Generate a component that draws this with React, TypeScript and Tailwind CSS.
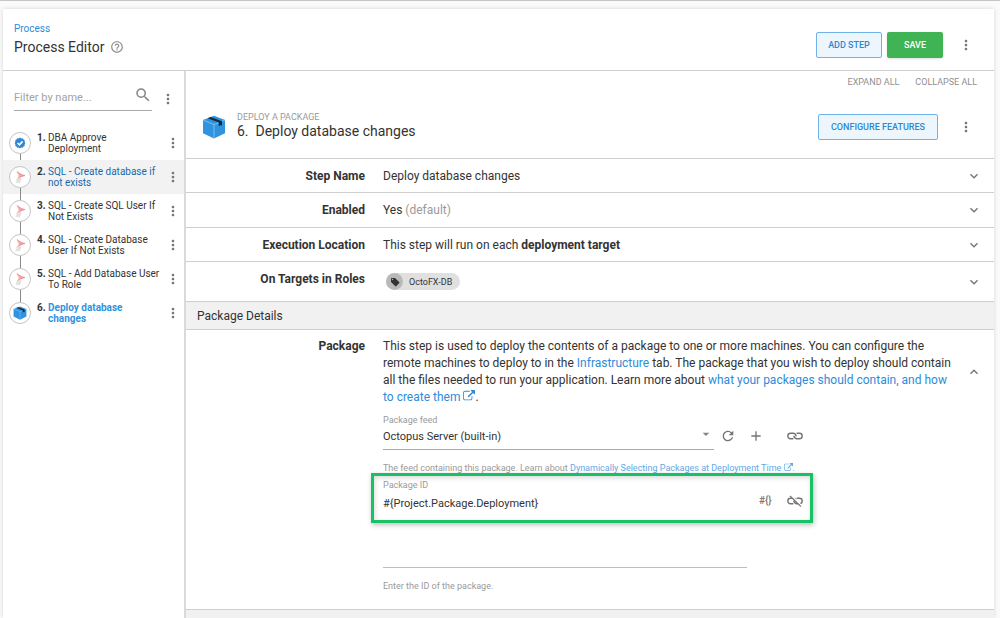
import type { ReactNode } from "react";
import {
  MdAdd,
  MdArrowDropDown,
  MdHelpOutline,
  MdKeyboardArrowDown,
  MdKeyboardArrowUp,
  MdMoreVert,
  MdRefresh,
  MdSearch,
} from "react-icons/md";

type StepKind = "approve" | "sql" | "package";

interface Step {
  lines: [string, string];
  kind: StepKind;
  state?: "hovered" | "current";
}

const steps: Step[] = [
  { lines: ["DBA Approve", "Deployment"], kind: "approve" },
  { lines: ["SQL - Create database if", "not exists"], kind: "sql", state: "hovered" },
  { lines: ["SQL - Create SQL User If", "Not Exists"], kind: "sql" },
  { lines: ["SQL - Create Database", "User If Not Exists"], kind: "sql" },
  { lines: ["SQL - Add Database User", "To Role"], kind: "sql" },
  { lines: ["Deploy database", "changes"], kind: "package", state: "current" },
];

function PackageIcon({ className }: { className: string }) {
  return (
    <svg viewBox="0 0 24 24" className={className} aria-hidden="true">
      <path d="M12 .8 23 5v13.200L12 23.400 1 18.200V5z" fill="#2f93e0" />
      <path d="M1 5 12 9.600 23 5M12 9.600V23" fill="none" stroke="#8fc8f4" strokeWidth=".8" />
      <path d="m5.600 3.200 3-1.200L20 6.200v4.600l-1.500-.9-1.700 1.600V7.600z" fill="#122b40" />
    </svg>
  );
}

function ApproveIcon() {
  return (
    <svg viewBox="0 0 12 12" className="size-3" aria-hidden="true">
      <path
        d="M6 .6 7.300 1.400 8.800 1.200 9.500 2.600 10.800 3.300 10.600 4.800 11.400 6 10.600 7.300 10.800 8.800 9.500 9.500 8.800 10.800 7.300 10.600 6 11.400 4.700 10.600 3.200 10.800 2.500 9.500 1.200 8.800 1.400 7.300.6 6 1.400 4.800 1.200 3.300 2.500 2.600 3.200 1.200 4.700 1.400z"
        fill="#2f87d6"
      />
      <path d="M3.500 6 5.400 7.800 8.600 4.400" fill="none" stroke="#fff" strokeWidth="1.600" />
    </svg>
  );
}

function SqlIcon() {
  return (
    <svg viewBox="0 0 16 16" className="size-4" aria-hidden="true">
      <path d="M3.500 13.800c.5-2.600 2.500-4.800 5.500-5.300L7.800 14 5 14.300z" fill="#e4e4e4" />
      <path d="M8.800 9.500 7.400 13.500" stroke="#c8c8c8" strokeWidth=".6" fill="none" />
      <path d="M4.500 2.200C6.500 2.800 8 5.300 13.500 6.400 10 7.600 7 9 4 11.200 5.800 8.800 7 7.600 6.600 6.200 6.200 4.700 5 3.600 4.500 2.200z" fill="#f3aaaa" />
      <path d="M5 2.600C7 3.900 8.500 5.800 13 6.500L8 7.600" fill="none" stroke="#e88082" strokeWidth=".6" />
    </svg>
  );
}

function ExternalIcon({ className }: { className: string }) {
  return (
    <svg viewBox="0 0 1792 1792" className={className} fill="currentColor" aria-hidden="true">
      <path d="M1408 928v320q0 119-84.500 203.500t-203.500 84.500h-832q-119 0-203.500-84.500t-84.500-203.500v-832q0-119 84.500-203.500t203.500-84.500h704q14 0 23 9t9 23v64q0 14-9 23t-23 9h-704q-66 0-113 47t-47 113v832q0 66 47 113t113 47h832q66 0 113-47t47-113v-320q0-14 9-23t23-9h64q14 0 23 9t9 23zm384-864v512q0 26-19 45t-45 19-45-19l-176-176-652 652q-10 10-23 10t-23-10l-114-114q-10-10-10-23t10-23l652-652-176-176q-19-19-19-45t19-45 45-19h512q26 0 45 19t19 45z" />
    </svg>
  );
}

function LinkIcon({ broken = false }: { broken?: boolean }) {
  return (
    <svg viewBox="0 0 18 14" className="h-3.5 w-[18px]" fill="none" stroke="currentColor" strokeWidth="1.400" aria-hidden="true">
      <path d="M7.400 9.700H4.500a2.700 2.700 0 0 1 0-5.400H7.200Q9.400 4.300 10.300 7.200" />
      <path d="M10.600 4.300H13.500a2.700 2.700 0 0 1 0 5.400H10.800Q8.600 9.700 7.700 6.800" />
      {broken && (
        <>
          <path d="M5 1.400 15.800 11.700" stroke="#fff" />
          <path d="M4 2 15 12.600" strokeWidth="1.200" />
        </>
      )}
    </svg>
  );
}

function MoreButton({ label }: { label: string }) {
  return (
    <button type="button" aria-label={label} className="flex size-4 shrink-0 items-center justify-center text-[#757575]">
      <MdMoreVert className="size-4" />
    </button>
  );
}

function StepItem({ step, index }: { step: Step; index: number }) {
  const tone =
    step.state === "hovered" ? "text-[#1b68ac]" : step.state === "current" ? "font-bold text-[#2f93e0]" : "text-[#333333]";
  return (
    <li className={`relative flex h-[34px] items-center pr-[3px] pl-1.5 ${step.state === "hovered" ? "bg-[#f2f2f2]" : ""}`}>
      {index < steps.length - 1 && <span className="absolute top-7 left-[17px] h-3 w-px bg-[#8a8a8a]" />}
      <span className="relative z-10 flex size-[22px] shrink-0 items-center justify-center rounded-full border border-[#c4c4c4] bg-white">
        {step.kind === "approve" && <ApproveIcon />}
        {step.kind === "sql" && <SqlIcon />}
        {step.kind === "package" && <PackageIcon className="size-3.5" />}
      </span>
      <a href="#step" className="ml-1.5 flex min-w-0 flex-1 text-[10px] leading-[11px]">
        <b className="w-[11px] shrink-0 text-[#333333]">{index + 1}.</b>
        <span className={`whitespace-nowrap ${tone}`}>
          {step.lines[0]}
          <br />
          {step.lines[1]}
        </span>
      </a>
      <MoreButton label={`Actions for step ${index + 1}`} />
    </li>
  );
}

interface RowProps {
  title: string;
  className: string;
  titleClassName?: string;
  children: ReactNode;
}

function Row({ title, className, titleClassName = "", children }: RowProps) {
  return (
    <section className={`flex items-center border-b border-[#cfcfcf] pr-3 ${className}`}>
      <h3 className={`w-[179px] shrink-0 text-right font-bold ${titleClassName}`}>{title}</h3>
      <div className="ml-[18px] flex-1">{children}</div>
      <button type="button" aria-label={`Expand ${title}`} className="text-[#757575]">
        <MdKeyboardArrowDown className="size-4" />
      </button>
    </section>
  );
}

const link = "text-[#2f8bd8]";

export default function App() {
  return (
    <div className="flex min-h-screen flex-col border-t border-[#c6c6c6] bg-[#fafafa] pt-2 pr-1.5 pl-[3px] font-[Roboto,sans-serif] text-xs text-[#333333]">
      <div className="flex flex-1 flex-col bg-white shadow-[0_0_4px_rgba(0,0,0,0.15)]">
        <header className="flex h-[62px] items-center border-b border-[#cfcfcf] pr-5 pl-[11px]">
          <div className="flex-1 pb-0.5">
            <a href="#process" className={`block text-[10px] leading-4 ${link}`}>
              Process
            </a>
            <h1 className="flex items-center gap-1.5 text-sm leading-5">
              Process Editor
              <MdHelpOutline className="size-3.5 text-[#8a8a8a]" />
            </h1>
          </div>
          <div className="flex items-center pt-2.5">
            <button type="button" className="h-[26px] w-[66px] rounded-xs border border-[#6fb2ea] bg-[#edf6fd] text-[9px] font-medium text-[#2f87d0]">
              ADD STEP
            </button>
            <button type="button" className="mr-[15px] ml-[5px] h-[26px] w-14 rounded-xs bg-[#40b355] text-[9px] font-medium text-white shadow-sm">
              SAVE
            </button>
            <MoreButton label="Process actions" />
          </div>
        </header>

        <div className="flex flex-1">
          <aside className="w-[183px] shrink-0 border-r-2 border-[#dadada]">
            <div className="flex items-end gap-2 pt-3 pr-2 pl-[11px]">
              <label className="flex h-7 flex-1 items-center border-b border-[#a8a8a8]">
                <input type="text" aria-label="Filter by name" placeholder="Filter by name..." className="w-full min-w-0 pt-1 text-[11px] outline-none placeholder:text-[#a3a3a3]" />
                <MdSearch className="mb-1 size-[18px] shrink-0 text-[#858585]" />
              </label>
              <div className="pb-1">
                <MoreButton label="Step list actions" />
              </div>
            </div>
            <ol className="mt-[15px]">
              {steps.map((step, index) => (
                <StepItem key={step.lines.join()} step={step} index={index} />
              ))}
            </ol>
          </aside>

          <main className="flex min-w-0 flex-1 flex-col">
            <div className="flex h-[22px] items-center justify-end gap-4 pr-[17px] text-[9px] text-[#8f8f8f]">
              <button type="button">EXPAND ALL</button>
              <button type="button">COLLAPSE ALL</button>
            </div>

            <div className="flex h-[66px] items-center border-b border-[#cfcfcf] pt-0.5 pr-5 pl-4">
              <PackageIcon className="size-6" />
              <div className="ml-[11px] flex-1 pb-1">
                <p className="text-[9px] leading-3 text-[#9a9a9a]">DEPLOY A PACKAGE</p>
                <h2 className="text-sm leading-4">6. &nbsp;Deploy database changes</h2>
              </div>
              <button type="button" className="mr-5 h-[26px] w-[120px] rounded-xs border border-[#6fb2ea] bg-[#edf6fd] text-[9px] font-medium text-[#2f87d0]">
                CONFIGURE FEATURES
              </button>
              <MoreButton label="Step actions" />
            </div>

            <Row title="Step Name" className="h-[34px]">
              Deploy database changes
            </Row>
            <Row title="Enabled" className="h-[35px]">
              Yes <span className="text-[#9a9a9a]">(default)</span>
            </Row>
            <Row title="Execution Location" className="h-[34px]">
              This step will run on each <b>deployment target</b>
            </Row>
            <Row title="On Targets in Roles" className="h-10" titleClassName="pb-1.5">
              <span className="ml-[3px] inline-flex h-[17px] items-center rounded-full bg-[#e0e0e0] pr-2 align-middle text-[9px]">
                <span className="mr-1.5 flex size-[17px] items-center justify-center rounded-full bg-[#b9b9b9]">
                  <svg viewBox="0 0 10 10" className="size-2.5" aria-hidden="true">
                    <path d="M1 1.500Q1 1 1.500 1H5L9.300 5.300Q9.700 5.700 9.300 6.100L6.100 9.300Q5.700 9.700 5.300 9.300L1 5z" fill="#333" />
                    <circle cx="2.500" cy="2.500" r=".7" fill="#b9b9b9" />
                  </svg>
                </span>
                OctoFX-DB
              </span>
            </Row>

            <h2 className="flex h-7 items-center border-b border-[#cfcfcf] bg-[#f1f1f1] pl-[11px] text-xs">Package Details</h2>

            <section className="flex h-[280px] border-b border-[#cfcfcf] pt-2 pr-3">
              <h3 className="w-[179px] shrink-0 text-right leading-[17px] font-bold">Package</h3>
              <div className="ml-[18px] min-w-0 flex-1">
                <p className="leading-[17px]">
                  This step is used to deploy the contents of a package to one or more machines. You can configure the
                  <br />
                  remote machines to deploy to in the <a href="#infrastructure" className={link}>Infrastructure</a> tab. The package that you wish to deploy should contain
                  <br />
                  all the files needed to run your application. Learn more about{" "}
                  <a href="#packages" className={link}>
                    what your packages should contain, and how
                    <br />
                    to create them <ExternalIcon className="inline size-3 align-[-1px]" />
                  </a>
                  .
                </p>

                <div className="mt-1.5 flex items-end">
                  <div className="w-[331px] border-b border-[#a8a8a8]">
                    <label htmlFor="feed" className="block text-[9px] leading-4 text-[#9a9a9a]">
                      Package feed
                    </label>
                    <div className="relative h-[21px]">
                      <select id="feed" className="h-4 w-full appearance-none bg-transparent text-[11px] leading-4 outline-none">
                        <option>Octopus Server (built-in)</option>
                      </select>
                      <MdArrowDropDown className="pointer-events-none absolute -top-0.5 right-0 size-4 text-[#858585]" />
                    </div>
                  </div>
                  <div className="mb-1.5 ml-1.5 flex items-center text-[#757575]">
                    <button type="button" aria-label="Refresh feeds">
                      <MdRefresh className="size-4" />
                    </button>
                    <button type="button" aria-label="Add feed" className="ml-3">
                      <MdAdd className="size-4" />
                    </button>
                    <button type="button" aria-label="Bind feed" className="ml-[22px]">
                      <LinkIcon />
                    </button>
                  </div>
                </div>
                <p className="mt-3 text-[9px] leading-3 text-[#9a9a9a]">
                  The feed containing this package. Learn about{" "}
                  <a href="#dynamic-packages" className="text-[#62a9e4]">
                    Dynamically Selecting Packages at Deployment Time <ExternalIcon className="inline size-[9px] align-[-1px]" />
                  </a>
                  .
                </p>

                <div className="relative mt-[5px] w-[430px]">
                  <label htmlFor="package-id" className="block text-[9px] leading-3 text-[#9a9a9a]">
                    Package ID
                  </label>
                  <div className="flex h-[77px] items-start pr-[9px]">
                    <div className="h-full w-[364px] border-b border-[#bdbdbd] pt-1">
                      <input id="package-id" type="text" defaultValue="#{Project.Package.Deployment}" className="h-4 w-full text-[11px] outline-none" />
                    </div>
                    <button type="button" aria-label="Insert variable" className="mt-0.5 ml-3 text-[10px] leading-4 font-medium text-[#757575]">
                      #&#123;&#125;
                    </button>
                    <button type="button" aria-label="Unbind package" className="mt-[3px] ml-auto text-[#757575]">
                      <LinkIcon broken />
                    </button>
                  </div>
                  <div className="pointer-events-none absolute -top-1.5 -left-3 h-[50px] w-[442px] border-[3px] border-[#17c265] shadow-[1px_2px_5px_rgba(0,0,0,0.25),inset_1px_2px_5px_rgba(0,0,0,0.15)]" />
                </div>
                <p className="mt-3 text-[9px] leading-3 text-[#9a9a9a]">Enter the ID of the package.</p>
              </div>
              <button type="button" aria-label="Collapse Package" className="mt-[26px] self-start text-[#757575]">
                <MdKeyboardArrowUp className="size-4" />
              </button>
            </section>
            <div className="flex-1 bg-[#f1f1f1]" />
          </main>
        </div>
      </div>
    </div>
  );
}
